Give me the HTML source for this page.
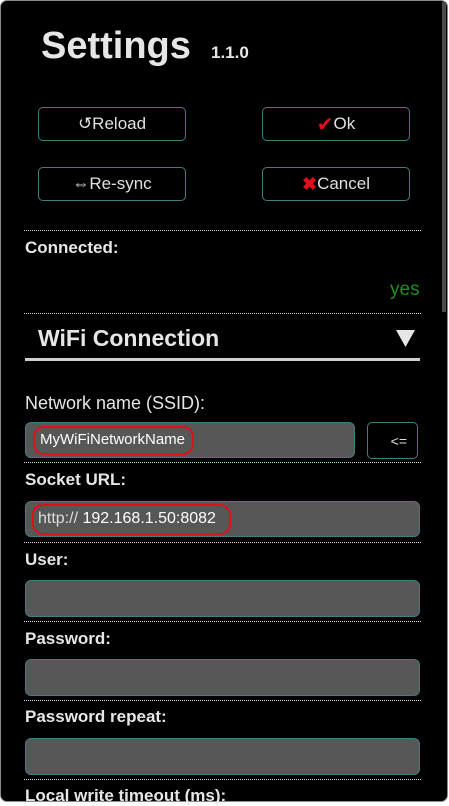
<!DOCTYPE html>
<html><head><style>
*{margin:0;padding:0;box-sizing:border-box}
body{width:449px;height:802px;background:#fff;overflow:hidden;font-family:"Liberation Sans",sans-serif;position:relative}
.frame{position:absolute;left:0;top:0;width:448px;height:802px;background:#000;border:1px solid #8a8a8a;border-radius:7px}
.a{position:absolute}
.t{color:#e6e6e6;white-space:nowrap}
.btn{position:absolute;border:1.5px solid #3f7d84;border-radius:5px;color:#e0e0e0;font-size:17px;display:flex;align-items:center;justify-content:center;background:#000}
.dot{position:absolute;left:24px;width:397px;height:0;border-top:1px dotted #d8d8d8}
.inp{position:absolute;background:#575757;border:1.5px solid #3f7d84;border-radius:6px}
.red{position:absolute;border:2px solid #e0101a;border-radius:11px}
.lb{position:absolute;left:25px;font-weight:bold;font-size:17px;color:#e6e6e6;white-space:nowrap}
</style></head><body>
<div class="frame"></div>
<div class="a" style="left:442px;top:2px;width:4px;height:310px;background:#4a4a4a"></div>
<div class="a t" style="left:41px;top:25px;font-size:38px;font-weight:bold">Settings</div>
<div class="a t" style="left:211px;top:43px;font-size:17px;font-weight:bold">1.1.0</div>
<div class="btn" style="left:38px;top:107px;width:148px;height:34px">↺Reload</div>
<div class="btn" style="left:262px;top:107px;width:148px;height:34px"><span style="color:#e0101a;font-size:20px">✔</span>Ok</div>
<div class="btn" style="left:38px;top:167px;width:148px;height:34px">⇔Re-sync</div>
<div class="btn" style="left:262px;top:167px;width:148px;height:34px"><span style="color:#e0101a;font-size:18px;font-weight:bold">✖</span>Cancel</div>
<div class="dot" style="top:230px"></div>
<div class="lb" style="top:238px">Connected:</div>
<div class="a" style="left:390px;top:279px;color:#1f8f1f;font-size:19px">yes</div>
<div class="dot" style="top:313px"></div>
<div class="a t" style="left:38px;top:325px;font-size:23px;font-weight:bold">WiFi Connection</div>
<svg class="a" style="left:396px;top:330px" width="20" height="18"><polygon points="0,0 19,0 9.5,17" fill="#e6e6e6"/></svg>
<div class="a" style="left:25px;top:358px;width:395px;height:3px;background:#cfcfcf"></div>
<div class="a t" style="left:25px;top:393px;font-size:18px">Network name (SSID):</div>
<div class="inp" style="left:25px;top:422px;width:330px;height:36px"></div>
<div class="red" style="left:33px;top:426px;width:161px;height:29px"></div>
<div class="a" style="left:40px;top:431px;color:#fff;font-size:15px">MyWiFiNetworkName</div>
<div class="btn" style="left:367px;top:422px;width:51px;height:37px;font-size:14px;justify-content:flex-end;padding-right:10px">&lt;=</div>
<div class="dot" style="top:462px"></div>
<div class="lb" style="top:470px">Socket URL:</div>
<div class="inp" style="left:25px;top:501px;width:395px;height:36px"></div>
<div class="red" style="left:32px;top:504px;width:199px;height:31px"></div>
<div class="a" style="left:38px;top:510px;color:#fff;font-size:16px"><span style="color:#ddd">http://</span> 192.168.1.50:8082</div>
<div class="dot" style="top:542px"></div>
<div class="lb" style="top:550px">User:</div>
<div class="inp" style="left:25px;top:580px;width:395px;height:37px"></div>
<div class="dot" style="top:621px"></div>
<div class="lb" style="top:629px">Password:</div>
<div class="inp" style="left:25px;top:659px;width:395px;height:37px"></div>
<div class="dot" style="top:700px"></div>
<div class="lb" style="top:707px">Password repeat:</div>
<div class="inp" style="left:25px;top:738px;width:395px;height:37px"></div>
<div class="dot" style="top:779px"></div>
<div class="lb" style="top:786px">Local write timeout (ms):</div>
</body></html>
